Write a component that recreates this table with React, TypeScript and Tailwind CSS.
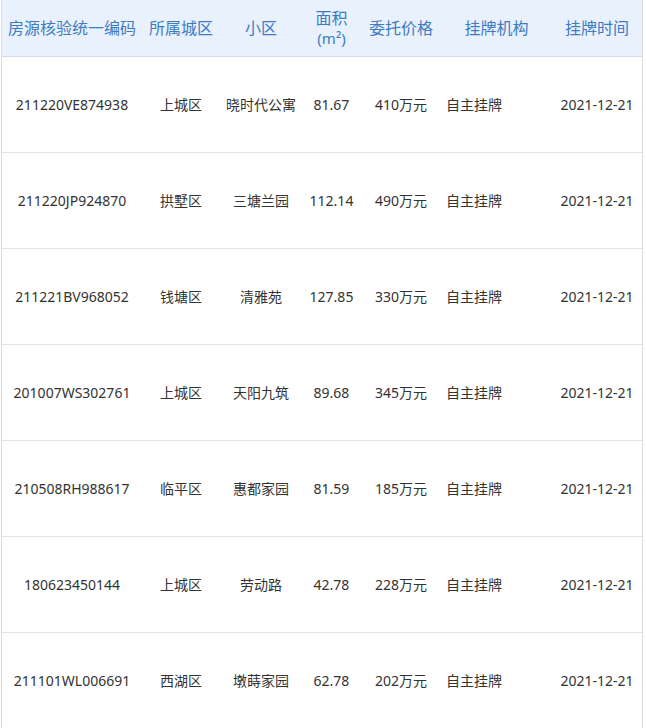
const rows = [
  { code: '211220VE874938', district: '上城区', estate: '晓时代公寓', area: '81.67', price: '410万元', agency: '自主挂牌', date: '2021-12-21' },
  { code: '211220JP924870', district: '拱墅区', estate: '三塘兰园', area: '112.14', price: '490万元', agency: '自主挂牌', date: '2021-12-21' },
  { code: '211221BV968052', district: '钱塘区', estate: '清雅苑', area: '127.85', price: '330万元', agency: '自主挂牌', date: '2021-12-21' },
  { code: '201007WS302761', district: '上城区', estate: '天阳九筑', area: '89.68', price: '345万元', agency: '自主挂牌', date: '2021-12-21' },
  { code: '210508RH988617', district: '临平区', estate: '惠都家园', area: '81.59', price: '185万元', agency: '自主挂牌', date: '2021-12-21' },
  { code: '180623450144', district: '上城区', estate: '劳动路', area: '42.78', price: '228万元', agency: '自主挂牌', date: '2021-12-21' },
  { code: '211101WL006691', district: '西湖区', estate: '墩蒔家园', area: '62.78', price: '202万元', agency: '自主挂牌', date: '2021-12-21' },
];

const cols = 'grid grid-cols-[140px_78px_82px_59px_80px_111px_90px]';

export default function App() {
  return (
    <div
      className="min-h-screen bg-white"
      style={{ fontFamily: '"Noto Sans", "Noto Sans CJK SC", sans-serif' }}
    >
      <div className="ml-px w-[642px] border-x border-[#dcdcdc]">
        {/* 表头 */}
        <div className={`${cols} h-[57px] items-center border-b border-[#d6dde6] bg-[#e8f1fc] text-[16px] leading-[20px] text-[#3d7cc4]`}>
          <div className="text-center">房源核验统一编码</div>
          <div className="text-center">所属城区</div>
          <div className="text-center">小区</div>
          <div className="text-center">
            <div>面积</div>
            <div className="text-[15px]">(m²)</div>
          </div>
          <div className="text-center">委托价格</div>
          <div className="text-center">挂牌机构</div>
          <div className="text-center">挂牌时间</div>
        </div>

        {rows.map((r) => (
          <div
            key={r.code}
            className={`${cols} h-[96px] items-center border-b border-[#e2e2e2] text-[14px] text-[#333333]`}
          >
            <div className="text-center">{r.code}</div>
            <div className="text-center">{r.district}</div>
            <div className="text-center">{r.estate}</div>
            <div className="text-center">{r.area}</div>
            <div className="text-center">{r.price}</div>
            <div className="pl-[5px]">{r.agency}</div>
            <div className="text-center">{r.date}</div>
          </div>
        ))}
      </div>
    </div>
  );
}
